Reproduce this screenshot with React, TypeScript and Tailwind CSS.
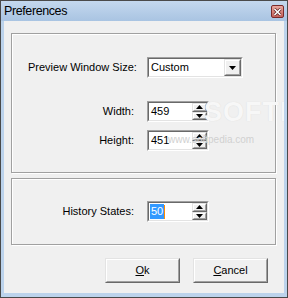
import React from "react";

const font = { fontFamily: '"Liberation Sans", Arial, sans-serif' };

function Sunken({ className, children }: { className?: string; children?: React.ReactNode }) {
  return (
    <div className={"border border-t-[#a0a0a0] border-l-[#a0a0a0] border-r-white border-b-white " + (className ?? "")}>
      <div className="h-full w-full border border-t-[#696969] border-l-[#696969] border-r-[#e3e3e3] border-b-[#e3e3e3] bg-white flex items-center relative">
        {children}
      </div>
    </div>
  );
}

function Raised({ className, children }: { className?: string; children?: React.ReactNode }) {
  return (
    <div className={"border border-t-[#e3e3e3] border-l-[#e3e3e3] border-r-[#696969] border-b-[#696969] " + (className ?? "")}>
      <div className="h-full w-full border border-t-white border-l-white border-r-[#a0a0a0] border-b-[#a0a0a0] bg-[#f0f0f0] flex items-center justify-center">
        {children}
      </div>
    </div>
  );
}

function Up() {
  return (
    <svg width="7" height="4" viewBox="0 0 7 4"><path d="M3.5 0 L7 4 L0 4 Z" fill="#000" /></svg>
  );
}
function Down() {
  return (
    <svg width="7" height="4" viewBox="0 0 7 4"><path d="M0 0 L7 0 L3.5 4 Z" fill="#000" /></svg>
  );
}

function Spin({ value, selected }: { value: string; selected?: boolean }) {
  return (
    <Sunken className="w-[62px] h-[21px]">
      <div className="flex-1 pl-[1px] text-[11px] leading-none text-black flex items-center">
        {selected ? (
          <>
            <span className="bg-[#3399ff] text-white px-[1px] py-[2px]">{value}</span>
            <span className="w-[1px] h-[14px] bg-[#ff8a00]" />
          </>
        ) : (
          <span className="px-[1px]">{value}</span>
        )}
      </div>
      <div className="flex flex-col h-full w-[15px]">
        <Raised className="h-1/2 w-full"><Up /></Raised>
        <Raised className="h-1/2 w-full"><Down /></Raised>
      </div>
    </Sunken>
  );
}

export default function App() {
  return (
    <div className="w-[288px] h-[298px] bg-[#bcd3ec] border border-[#4a4a4a] flex flex-col relative overflow-hidden" style={font}>
      {/* title bar */}
      <div className="h-[20px] flex items-center justify-between pl-[3px] pr-[3px] bg-gradient-to-b from-[#c4d8ee] to-[#a9c4e2]">
        <span className="text-[12.5px] tracking-[-0.4px] text-black leading-none mt-[1px]">Preferences</span>
        <div className="w-[13px] h-[13px] rounded-[2px] border border-[#7a2a2a] bg-gradient-to-b from-[#e8a8a0] to-[#c4605a] flex items-center justify-center mt-[1px]">
          <svg width="9" height="8" viewBox="0 0 9 8">
            <path d="M1.5 1 L7.5 7 M7.5 1 L1.5 7" stroke="#5a2020" strokeWidth="3" />
            <path d="M1.5 1 L7.5 7 M7.5 1 L1.5 7" stroke="#fff" strokeWidth="1.6" />
          </svg>
        </div>
      </div>
      {/* client */}
      <div className="flex-1 mx-[3px] mb-[4px] bg-[#f0f0f0] flex flex-col text-[11px] text-black relative overflow-hidden">
        {/* group 1 */}
        <div className="mt-[12px] ml-[7px] w-[265px] h-[140px] border border-[#a0a0a0] shadow-[inset_1px_1px_0_#fff,1px_1px_0_#fff] flex flex-col">
          <div className="mt-[23px] flex items-center">
            <span className="ml-[16px] w-[119px]">Preview Window Size:</span>
            <Sunken className="w-[96px] h-[21px]">
              <span className="flex-1 pl-[2px]">Custom</span>
              <Raised className="w-[17px] h-full"><Down /></Raised>
            </Sunken>
          </div>
          <div className="mt-[23px] flex items-center">
            <span className="w-[122px] text-right mr-[13px]">Width:</span>
            <Spin value="459" />
          </div>
          <div className="mt-[8px] flex items-center">
            <span className="w-[122px] text-right mr-[13px]">Height:</span>
            <Spin value="451" />
          </div>
        </div>
        {/* group 2 */}
        <div className="mt-[5px] ml-[7px] w-[265px] h-[67px] border border-[#a0a0a0] shadow-[inset_1px_1px_0_#fff,1px_1px_0_#fff] flex flex-col">
          <div className="mt-[22px] flex items-center">
            <span className="w-[122px] text-right mr-[13px]">History States:</span>
            <Spin value="50" selected />
          </div>
        </div>
        {/* buttons */}
        <div className="mt-[13px] flex justify-end gap-[13px] mr-[16px]">
          <Raised className="w-[75px] h-[25px]">
            <span><span className="underline">O</span>k</span>
          </Raised>
          <Raised className="w-[75px] h-[25px]">
            <span><span className="underline">C</span>ancel</span>
          </Raised>
        </div>
        {/* watermark */}
        <div className="absolute left-[200px] top-[78px] text-[27px] font-bold text-[#f7f7f7] pointer-events-none leading-none tracking-[1px] [text-shadow:0_0_1px_#d8d8d8]">SOFTPEDIA</div>
        <div className="absolute left-[164px] top-[114px] text-[10px] text-[#d0d0d0] pointer-events-none leading-none">www.softpedia.com</div>
      </div>
    </div>
  );
}
